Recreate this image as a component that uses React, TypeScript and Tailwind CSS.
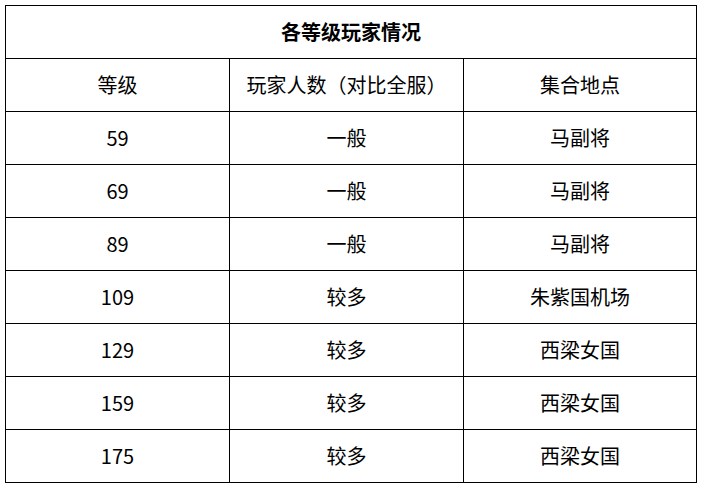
const ROWS = [
  { level: "59", players: "一般", place: "马副将" },
  { level: "69", players: "一般", place: "马副将" },
  { level: "89", players: "一般", place: "马副将" },
  { level: "109", players: "较多", place: "朱紫国机场" },
  { level: "129", players: "较多", place: "西梁女国" },
  { level: "159", players: "较多", place: "西梁女国" },
  { level: "175", players: "较多", place: "西梁女国" },
];

const cell = "border border-black text-center align-middle h-[53px] p-0 leading-none";

export default function App() {
  return (
    <div
      className="bg-white p-[5px] text-[20px] text-black"
      style={{ fontFamily: '"Noto Sans CJK SC", "Noto Sans", sans-serif' }}
    >
      <table className="w-[691px] table-fixed border-collapse">
        <colgroup>
          <col className="w-[224px]" />
          <col className="w-[234px]" />
          <col className="w-[233px]" />
        </colgroup>
        <tbody>
          <tr>
            <td colSpan={3} className={cell + " font-bold"}>
              各等级玩家情况
            </td>
          </tr>
          <tr>
            <td className={cell}>等级</td>
            <td className={cell}>玩家人数（对比全服）</td>
            <td className={cell}>集合地点</td>
          </tr>
          {ROWS.map((r) => (
            <tr key={r.level}>
              <td className={cell}>{r.level}</td>
              <td className={cell}>{r.players}</td>
              <td className={cell}>{r.place}</td>
            </tr>
          ))}
        </tbody>
      </table>
    </div>
  );
}
